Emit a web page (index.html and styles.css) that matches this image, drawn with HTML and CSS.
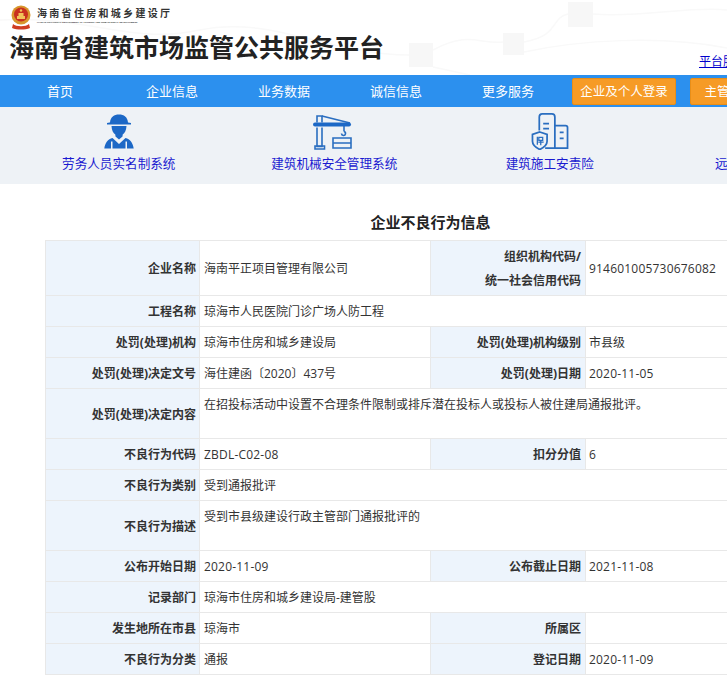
FILE: index.html
```html
<!DOCTYPE html>
<html lang="zh-CN">
<head>
<meta charset="utf-8">
<title>企业不良行为信息</title>
<link rel="stylesheet" href="styles.css">
</head>
<body>
<div class="page">
<header class="top">
  <svg class="pattern" width="727" height="75" viewBox="0 0 727 75" aria-hidden="true">
    <g fill="none" stroke="#f9f9f9" stroke-width="1.500">
      <path d="M0 20C90 15 130 45 200 30S330 55 409 55"/>
      <path d="M433 50C470 30 480 45 503 42"/>
      <path d="M524 42C560 36 550 18 568 14"/>
      <path d="M593 14C640 18 690 6 727 10"/>
      <path d="M433 67L470 75"/>
      <path d="M524 52C580 40 660 35 727 48"/>
    </g>
    <g fill="#f7f7f7">
      <rect x="409" y="43" width="24" height="24"/>
      <rect x="503" y="33" width="21" height="22"/>
      <rect x="568" y="2" width="25" height="25"/>
    </g>
  </svg>
  <div class="brand">
    <svg class="emblem" width="20" height="26" viewBox="0 0 20 26" aria-hidden="true">
      <circle cx="10" cy="11" r="9.500" fill="#d8962c"/>
      <circle cx="10" cy="10.500" r="7" fill="#c9301f"/>
      <path d="M6 12h8v3H6zM7.500 9h5v3h-5z" fill="#f1c35a"/>
      <circle cx="10" cy="6.500" r="1.200" fill="#f1c35a"/>
      <path d="M2 20c3 3 13 3 16 0l1 4c-5 2-13 2-18 0z" fill="#cf3d22"/>
    </svg>
    <div>
      <div class="dept">海南省住房和城乡建设厅</div>
      <div class="dept-en">HAINAN PROVINCIAL DEPARTMENT OF HOUSING AND URBAN-RURAL DEVELOPMENT</div>
    </div>
  </div>
  <h1 class="site">海南省建筑市场监管公共服务平台</h1>
  <a class="platform" href="#">平台服务</a>
</header>
<nav class="nav">
  <a href="#">首页</a>
  <a href="#">企业信息</a>
  <a href="#">业务数据</a>
  <a href="#">诚信信息</a>
  <a href="#">更多服务</a>
  <div class="logins">
    <a class="login" href="#">企业及个人登录</a>
    <a class="login" href="#">主管部门登录</a>
  </div>
</nav>
<section class="systems">
  <a class="sys" href="#">
    <svg width="36" height="36" viewBox="0 0 36 36" aria-hidden="true">
      <path fill="#1c68c6" d="M6 9.500C8 9 9 8.900 9 8.900C9.500 3.500 13 1 18 1s8.500 2.500 9 7.900c1 .1 2 .3 3 .6v1.500H6z"/>
      <path fill="#1c68c6" d="M10.500 12.500h15c-.2 4.500-1.800 7-3.800 8.600l-.2 2-3.500 3-3.500-3-.2-2c-2-1.600-3.600-4.100-3.800-8.600z"/>
      <path fill="#1c68c6" d="M11.500 24.500l6.500 6 6.500-6c4.500 1 7.500 5 8.200 10.500H26v-7h-1.500v7h-13v-7H10v7H3.300C4 29.500 7 25.500 11.500 24.500z"/>
    </svg>
    <span>劳务人员实名制系统</span>
  </a>
  <a class="sys" href="#">
    <svg width="42" height="36" viewBox="0 0 42 36" aria-hidden="true">
      <g fill="none" stroke="#2a6ec0" stroke-width="1.600">
        <path d="M4 9V2.500h5V9M4 14v19h5V14"/>
        <path d="M2 32.500h9.500v3H2zM9 2.500l28 7"/>
        <path d="M20 24.500h18v10H20zM20 29.500h18"/>
        <path d="M31 12v6"/>
        <path d="M31 18a2 2 0 1 1-2.500 2"/>
      </g>
      <rect x="0" y="9" width="38" height="4" rx="2" fill="#1c68c6"/>
    </svg>
    <span>建筑机械安全管理系统</span>
  </a>
  <a class="sys" href="#">
    <svg width="40" height="38" viewBox="0 0 40 38" aria-hidden="true">
      <g fill="none" stroke="#2a6ec0" stroke-width="1.800">
        <path d="M9 18V4a3 3 0 0 1 3-3h10a3 3 0 0 1 3 3v32H15"/>
        <path d="M25 13h11a2 2 0 0 1 2 2v21H25"/>
        <path d="M13 11h6M13 16h6M30 20h4M30 26h4"/>
      </g>
      <path fill="#eef2f6" stroke="#2a6ec0" stroke-width="1.800" d="M9.500 19.500l7.500 2.500v7c0 4-3.500 6.500-7.500 8.500C5.500 35.500 2 33 2 29v-7z"/>
      <path fill="none" stroke="#2a6ec0" stroke-width="1.300" d="M7 24.500v8M8.500 25h4v3h-4zM8 30h5.500M10.500 28v5"/>
    </svg>
    <span>建筑施工安责险</span>
  </a>
  <a class="sys" href="#">
    <svg width="40" height="38" viewBox="0 0 40 38" aria-hidden="true"></svg>
    <span>远程视频监控系统</span>
  </a>
</section>
<main class="content">
  <h2 class="title">企业不良行为信息</h2>
  <table class="info">
    <colgroup><col class="c1"><col class="c2"><col class="c3"><col class="c4"></colgroup>
    <tr class="r55"><th>企业名称</th><td>海南平正项目管理有限公司</td><th class="two">组织机构代码/<br>统一社会信用代码</th><td class="num">914601005730676082</td></tr>
    <tr><th>工程名称</th><td colspan="3">琼海市人民医院门诊广场人防工程</td></tr>
    <tr><th>处罚(处理)机构</th><td>琼海市住房和城乡建设局</td><th>处罚(处理)机构级别</th><td>市县级</td></tr>
    <tr><th>处罚(处理)决定文号</th><td>海住建函〔2020〕437号</td><th>处罚(处理)日期</th><td class="num">2020-11-05</td></tr>
    <tr class="r50"><th>处罚(处理)决定内容</th><td class="top-text" colspan="3">在招投标活动中设置不合理条件限制或排斥潜在投标人或投标人被住建局通报批评。</td></tr>
    <tr><th>不良行为代码</th><td class="num">ZBDL-C02-08</td><th>扣分分值</th><td class="num">6</td></tr>
    <tr><th>不良行为类别</th><td colspan="3">受到通报批评</td></tr>
    <tr class="r50"><th>不良行为描述</th><td class="top-text" colspan="3">受到市县级建设行政主管部门通报批评的</td></tr>
    <tr><th>公布开始日期</th><td class="num">2020-11-09</td><th>公布截止日期</th><td class="num">2021-11-08</td></tr>
    <tr><th>记录部门</th><td colspan="3">琼海市住房和城乡建设局-建管股</td></tr>
    <tr><th>发生地所在市县</th><td>琼海市</td><th>所属区</th><td></td></tr>
    <tr><th>不良行为分类</th><td>通报</td><th>登记日期</th><td class="num">2020-11-09</td></tr>
  </table>
</main>
</div>
</body>
</html>
```
FILE: styles.css
```css
html, body { margin: 0; padding: 0; height: 688px; overflow: hidden; background: #fff; }
body { font-family: "Open Sans", "Noto Sans CJK SC", "Liberation Sans", sans-serif; font-size: 12px; color: #333; }
a { text-decoration: none; }
.page { width: 900px; }
.top { position: relative; height: 75px; width: 727px; }
.pattern { position: absolute; left: 0; top: 0; }
.brand { position: relative; display: flex; gap: 6px; padding: 4px 0 0 11px; align-items: flex-start; }
.dept { font-size: 10px; line-height: 16px; letter-spacing: 2.300px; font-weight: 700; color: #333; margin-top: 1px; }
.dept-en { font-size: 2.400px; line-height: 4px; color: #333; white-space: nowrap; font-family: "Liberation Sans", sans-serif; font-weight: 700; }
.site { position: relative; margin: 0 0 0 9px; font-size: 25px; line-height: 32px; font-weight: 700; color: #222; letter-spacing: 0; font-family: "Noto Sans CJK SC", sans-serif; }
.platform { position: absolute; left: 699px; top: 54px; width: 28px; overflow: hidden; white-space: nowrap; color: #0000cc; font-size: 12px; line-height: 16px; text-decoration: underline; }
.nav { display: flex; width: 900px; height: 32px; padding-left: 3px; box-sizing: border-box; background: #2c90ee; align-items: center; }
.nav > a { width: 112px; flex: none; padding-left: 2px; box-sizing: border-box; text-align: center; color: #fff; font-size: 13px; line-height: 32px; }
.logins { display: flex; gap: 14px; margin-left: 9px; }
.login { width: 104px; height: 27px; box-sizing: border-box; background: #f69b26; border: 1px solid #e88e18; border-radius: 2px; color: #fff; font-size: 12.500px; line-height: 25px; text-align: center; white-space: nowrap; }
.systems { display: flex; height: 77px; width: 900px; background: #eef2f6; padding-left: 11px; box-sizing: border-box; }
.sys { width: 215.500px; flex: none; display: flex; flex-direction: column; align-items: center; color: #1a1ad0; font-size: 12.600px; line-height: 18px; padding-top: 6px; box-sizing: border-box; white-space: nowrap; }
.sys svg { height: 37px; margin-bottom: 5px; }
.content { padding-left: 45px; }
.title { margin: 0; height: 56px; width: 771px; text-align: center; font-size: 15px; line-height: 76px; font-weight: 700; color: #222; }
.info { border-collapse: collapse; table-layout: fixed; width: 800px; font-size: 12px; }
.c1 { width: 154px; }
.c2 { width: 231px; }
.c3 { width: 155px; }
.c4 { width: 260px; }
.info tr { height: 31px; }
.info tr.r55 { height: 55px; }
.info tr.r50 { height: 50px; }
.info th, .info td { border: 1px solid #e8e8e8; padding: 2px 4px 0; line-height: 24px; color: #333; vertical-align: middle; text-align: left; font-weight: 400; }
.info th { background: #edf4fc; text-align: right; font-weight: 700; color: #333; }
.info th:first-child { padding-right: 3px; }
.info td.top-text { vertical-align: top; padding-top: 4px; }
.info td.num { letter-spacing: 0.200px; }
.info th:nth-child(3) + td { padding-left: 3px; }
```
